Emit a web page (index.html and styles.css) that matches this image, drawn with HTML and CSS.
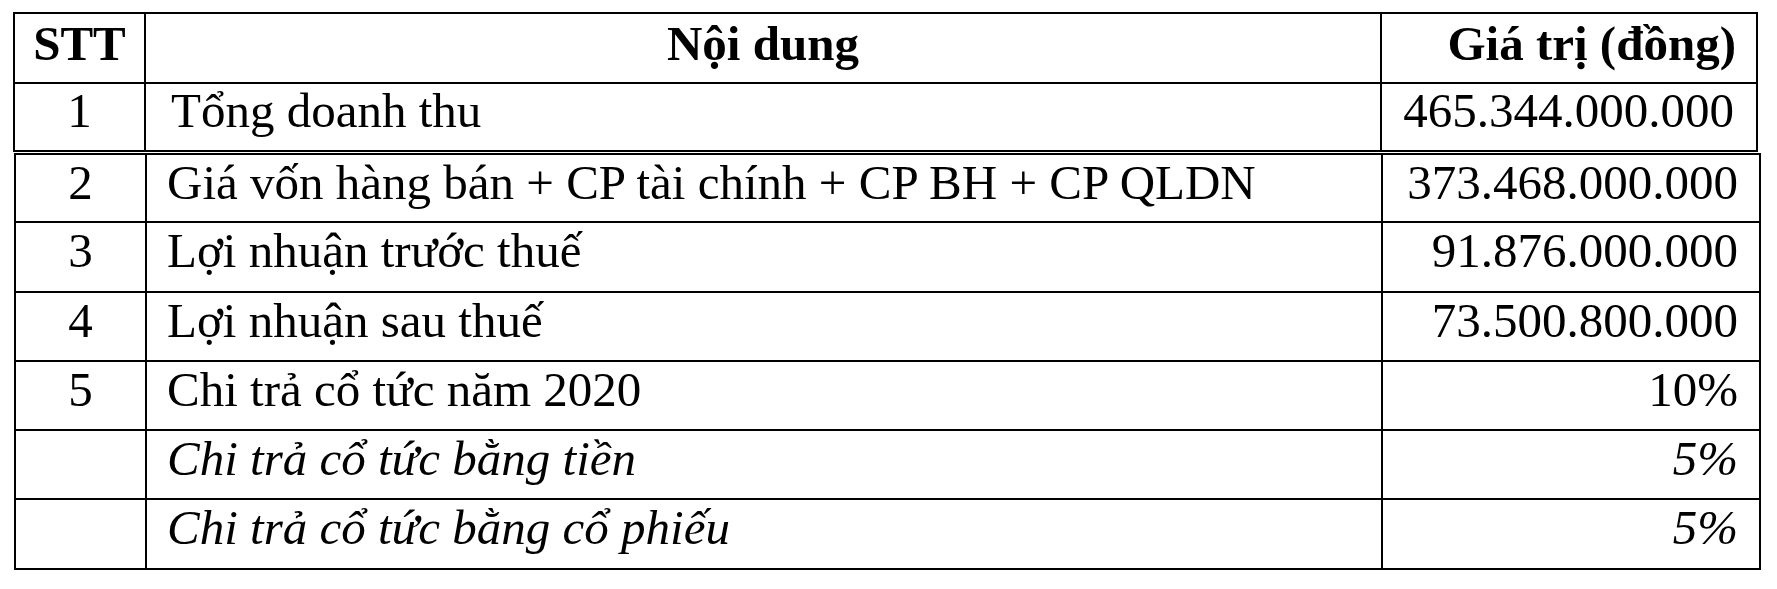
FILE: index.html
```html
<!DOCTYPE html>
<html lang="vi">
<head>
<meta charset="utf-8">
<title>Kế hoạch kinh doanh</title>
<link rel="stylesheet" href="styles.css">
</head>
<body>
<div class="page">
  <table class="grid grid-top">
    <colgroup><col class="c-stt"><col class="c-content"><col class="c-val c-val-top"></colgroup>
    <tr class="r-head">
      <th class="stt">STT</th>
      <th class="content head-center">Nội dung</th>
      <th class="val">Giá trị (đồng)</th>
    </tr>
    <tr class="r-68 first">
      <td class="stt">1</td>
      <td class="content">Tổng doanh thu</td>
      <td class="val">465.344.000.000</td>
    </tr>
  </table>
  <table class="grid grid-bottom">
    <colgroup><col class="c-stt"><col class="c-content"><col class="c-val c-val-bottom"></colgroup>
    <tr class="r-68">
      <td class="stt">2</td>
      <td class="content">Giá vốn hàng bán + CP tài chính + CP BH + CP QLDN</td>
      <td class="val">373.468.000.000</td>
    </tr>
    <tr class="r-70">
      <td class="stt">3</td>
      <td class="content">Lợi nhuận trước thuế</td>
      <td class="val">91.876.000.000</td>
    </tr>
    <tr class="r-69">
      <td class="stt">4</td>
      <td class="content">Lợi nhuận sau thuế</td>
      <td class="val">73.500.800.000</td>
    </tr>
    <tr class="r-69">
      <td class="stt">5</td>
      <td class="content">Chi trả cổ tức năm 2020</td>
      <td class="val">10%</td>
    </tr>
    <tr class="r-69 sub">
      <td class="stt"></td>
      <td class="content">Chi trả cổ tức bằng tiền</td>
      <td class="val">5%</td>
    </tr>
    <tr class="r-70 sub">
      <td class="stt"></td>
      <td class="content">Chi trả cổ tức bằng cổ phiếu</td>
      <td class="val">5%</td>
    </tr>
  </table>
</div>
</body>
</html>
```

FILE: styles.css
```css
* { box-sizing: border-box; }

html, body {
  margin: 0;
  padding: 0;
  background: #fff;
}

body {
  font-family: "Liberation Serif", "Times New Roman", serif;
  font-size: 49px;
  color: #000;
  width: 1777px;
  height: 589px;
  overflow: hidden;
}

.page {
  padding-top: 12px;
}

.grid {
  border-collapse: separate;
  border-spacing: 0;
  table-layout: fixed;
  border-top: 2px solid #000;
  border-left: 2px solid #000;
}

.grid-top {
  margin-left: 13px;
  width: 1745px;
}

.grid-bottom {
  margin-left: 14px;
  margin-top: 1px;
  width: 1747px;
}

.c-stt { width: 131px; }
.c-content { width: 1236px; }
.c-val-top { width: 376px; }
.c-val-bottom { width: 378px; }

.grid .cell,
.grid th,
.grid td {
  border-right: 2px solid #000;
  border-bottom: 2px solid #000;
  padding-top: 1px;
  padding-bottom: 0;
  padding-left: 0;
  padding-right: 0;
  vertical-align: top;
  line-height: 54px;
  white-space: nowrap;
}

.grid th {
  font-weight: bold;
  padding-top: 3px;
}

.r-head th { height: 70px; }
.r-68 td { height: 68px; }
.r-69 td { height: 69px; }
.r-70 td { height: 70px; }

.grid .first td { padding-top: 0; }

.grid .stt { text-align: center; }

.grid .content {
  text-align: left;
  padding-left: 20px;
}

.grid .first .content { padding-left: 25px; }

.grid .head-center {
  text-align: center;
  padding-left: 0;
}

.grid .val {
  text-align: right;
  padding-right: 21px;
}

.grid th.val { padding-right: 20px; }
.grid .first .val { padding-right: 22px; }

.grid .sub .content,
.grid .sub .val {
  font-style: italic;
}
```
